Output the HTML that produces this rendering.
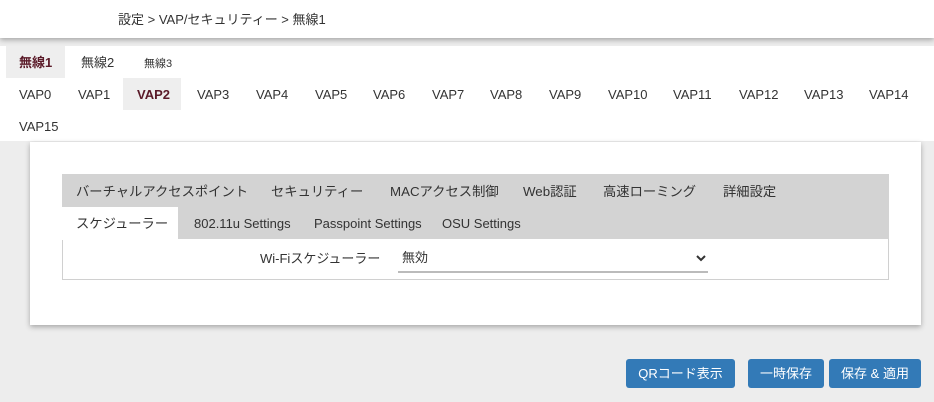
<!DOCTYPE html>
<html><head><meta charset="utf-8"><style>
*{margin:0;padding:0;box-sizing:border-box}
body{width:934px;height:402px;background:#ededed;font-family:"Liberation Sans","Noto Sans CJK JP",sans-serif;font-size:13px;line-height:16px;color:#333;position:relative;overflow:hidden}
.a{position:absolute;white-space:nowrap}
#hdr{position:absolute;left:0;top:0;width:934px;height:38px;background:#fff;box-shadow:0 2px 5px rgba(0,0,0,.3)}
#tabs{position:absolute;left:0;top:46px;width:934px;height:95px;background:#fff}
#card{position:absolute;left:30px;top:142px;width:891px;height:183px;background:#fff;box-shadow:0 2px 5px rgba(0,0,0,.3)}
.btn{position:absolute;top:359px;height:29px;background:#337ab7;color:#fff;border-radius:3px;text-align:center;line-height:29px;font-size:13px}
.act{color:#5a1a28;font-weight:bold}
.t{font-size:13.3px}
</style></head><body>
<div id="hdr"><span class="a" style="left:118px;top:12px">設定 &gt; VAP/セキュリティー &gt; 無線1</span></div>
<div id="tabs">
<div class="a" style="left:6px;top:0;width:59px;height:32px;background:#eee"></div>
<span class="a act" style="left:19px;top:9px">無線1</span>
<span class="a" style="left:81px;top:9px">無線2</span>
<span class="a" style="left:144px;top:10px;font-size:11px">無線3</span>
<div class="a" style="left:123px;top:32px;width:58px;height:32px;background:#eee"></div>
<span class="a" style="left:19px;top:41px">VAP0</span>
<span class="a" style="left:78px;top:41px">VAP1</span>
<span class="a act" style="left:137px;top:41px">VAP2</span>
<span class="a" style="left:197px;top:41px">VAP3</span>
<span class="a" style="left:256px;top:41px">VAP4</span>
<span class="a" style="left:315px;top:41px">VAP5</span>
<span class="a" style="left:373px;top:41px">VAP6</span>
<span class="a" style="left:432px;top:41px">VAP7</span>
<span class="a" style="left:490px;top:41px">VAP8</span>
<span class="a" style="left:549px;top:41px">VAP9</span>
<span class="a" style="left:608px;top:41px">VAP10</span>
<span class="a" style="left:673px;top:41px">VAP11</span>
<span class="a" style="left:739px;top:41px">VAP12</span>
<span class="a" style="left:804px;top:41px">VAP13</span>
<span class="a" style="left:869px;top:41px">VAP14</span>
<span class="a" style="left:19px;top:73px">VAP15</span>
</div>
<div id="card">
<div class="a" style="left:32px;top:32px;width:827px;height:106px;border:1px solid #d0d0d0"></div>
<div class="a" style="left:32px;top:32px;width:827px;height:65px;background:#d3d3d3"></div>
<div class="a" style="left:32px;top:65px;width:116px;height:33px;background:#fff"></div>
<span class="a t" style="left:46px;top:42px">バーチャルアクセスポイント</span>
<span class="a t" style="left:241px;top:42px">セキュリティー</span>
<span class="a t" style="left:360px;top:42px">MACアクセス制御</span>
<span class="a t" style="left:493px;top:42px">Web認証</span>
<span class="a t" style="left:573px;top:42px">高速ローミング</span>
<span class="a t" style="left:693px;top:42px">詳細設定</span>
<span class="a t" style="left:46px;top:74px">スケジューラー</span>
<span class="a" style="left:164px;top:74px">802.11u Settings</span>
<span class="a" style="left:284px;top:74px">Passpoint Settings</span>
<span class="a" style="left:412px;top:74px">OSU Settings</span>
<span class="a" style="left:230px;top:109px">Wi-Fiスケジューラー</span>
<span class="a" style="left:372px;top:108px">無効</span>
<div class="a" style="left:368px;top:129px;width:310px;height:2px;background:#bbb"></div>
<svg class="a" style="left:666px;top:112px" width="10" height="8" viewBox="0 0 10 8"><path d="M1 2 L5 6 L9 2" stroke="#333" stroke-width="2" fill="none"/></svg>
</div>
<div class="btn" style="left:626px;width:109px">QRコード表示</div>
<div class="btn" style="left:748px;width:76px">一時保存</div>
<div class="btn" style="left:829px;width:92px">保存 &amp; 適用</div>
</body></html>
